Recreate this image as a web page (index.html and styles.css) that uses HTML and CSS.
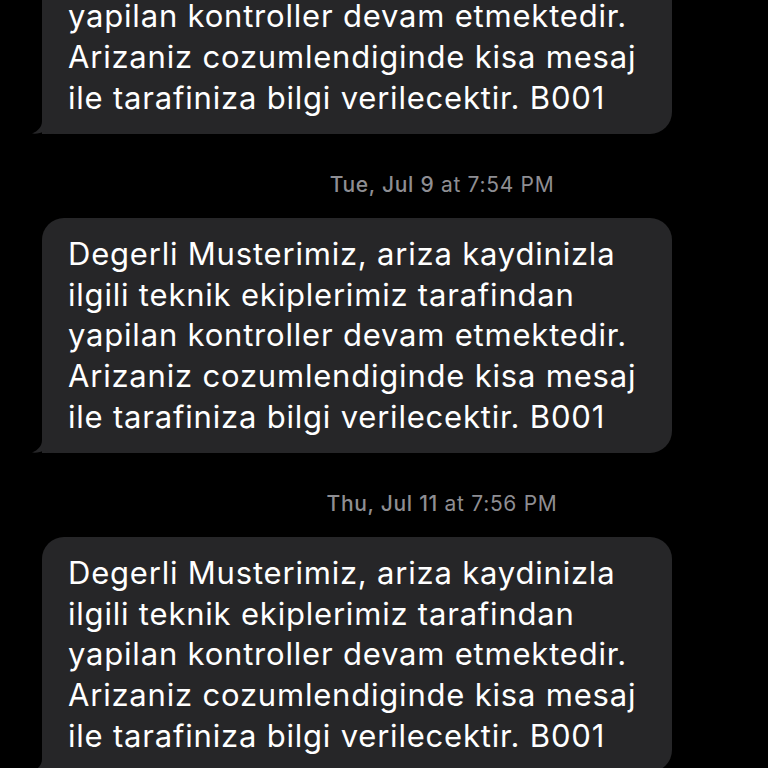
FILE: index.html
```html
<!DOCTYPE html>
<html>
<head>
<meta charset="utf-8">
<link rel="stylesheet" href="styles.css">
</head>
<body>
<div class="thread">
  <div class="bubble">
    <p class="msg">Degerli Musterimiz, ariza kaydinizla<br>ilgili teknik ekiplerimiz tarafindan<br>yapilan kontroller devam etmektedir.<br>Arizaniz cozumlendiginde kisa mesaj<br>ile tarafiniza bilgi verilecektir. B001</p>
    <svg class="tail" width="24" height="22" viewBox="0 0 24 22"><path d="M10 0 L10 9 C10 15 6 19 0 21.6 C5 22 9 21.2 12.5 19.2 C15 21 18 22 24 22 L24 0 Z"/></svg>
  </div>
  <div class="stamp"><b>Tue, Jul 9</b> at 7:54 PM</div>
  <div class="bubble">
    <p class="msg">Degerli Musterimiz, ariza kaydinizla<br>ilgili teknik ekiplerimiz tarafindan<br>yapilan kontroller devam etmektedir.<br>Arizaniz cozumlendiginde kisa mesaj<br>ile tarafiniza bilgi verilecektir. B001</p>
    <svg class="tail" width="24" height="22" viewBox="0 0 24 22"><path d="M10 0 L10 9 C10 15 6 19 0 21.6 C5 22 9 21.2 12.5 19.2 C15 21 18 22 24 22 L24 0 Z"/></svg>
  </div>
  <div class="stamp"><b>Thu, Jul 11</b> at 7:56 PM</div>
  <div class="bubble">
    <p class="msg">Degerli Musterimiz, ariza kaydinizla<br>ilgili teknik ekiplerimiz tarafindan<br>yapilan kontroller devam etmektedir.<br>Arizaniz cozumlendiginde kisa mesaj<br>ile tarafiniza bilgi verilecektir. B001</p>
    <svg class="tail" width="24" height="22" viewBox="0 0 24 22"><path d="M10 0 L10 9 C10 15 6 19 0 21.6 C5 22 9 21.2 12.5 19.2 C15 21 18 22 24 22 L24 0 Z"/></svg>
  </div>
</div>
</body>
</html>
```
FILE: styles.css
```css
html, body {
  margin: 0;
  padding: 0;
  background: #000;
  overflow: hidden;
  height: 768px;
}
body {
  font-family: Inter, "Noto Sans", "Liberation Sans", sans-serif;
}
.thread {
  display: flex;
  flex-direction: column;
  align-items: flex-start;
  margin-top: -101px;
  padding-left: 42px;
}
.bubble {
  position: relative;
  width: 630px;
  box-sizing: border-box;
  height: 235px;
  background: #262628;
  border-radius: 22px 22px 22px 0;
  padding: 16px 20px 0 26px;
}
.msg {
  margin: 0;
  color: #fff;
  font-size: 31px;
  letter-spacing: 0.8px;
  line-height: 40.7px;
  white-space: nowrap;
}
.tail {
  position: absolute;
  left: -10px;
  bottom: 0;
  fill: #262628;
}
.stamp {
  align-self: stretch;
  box-sizing: border-box;
  padding-left: 74px;
  text-align: center;
  color: #8e8e93;
  font-size: 21px;
  letter-spacing: 0.7px;
  line-height: 22px;
  margin: 40px 0 22px;
}
.stamp b {
  font-weight: 500;
}
```
